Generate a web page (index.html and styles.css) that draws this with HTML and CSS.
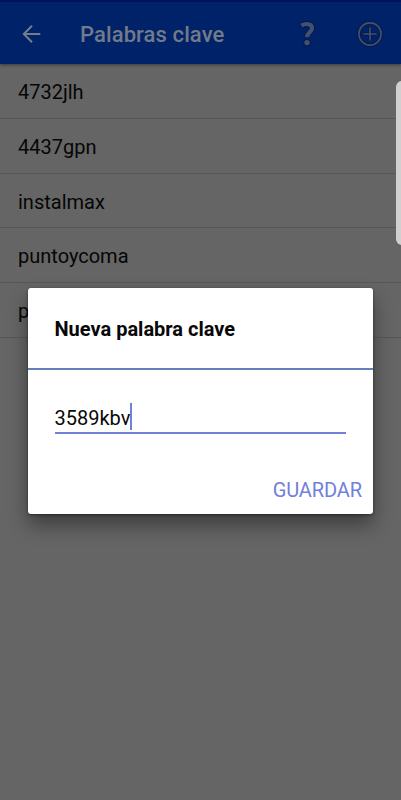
FILE: index.html
```html
<!DOCTYPE html>
<html lang="es">
<head>
<meta charset="utf-8">
<title>Palabras clave</title>
<link rel="stylesheet" href="styles.css">
</head>
<body>
<div class="screen">
  <header class="bar">
    <svg class="back" width="20" height="20" viewBox="0 0 20 20"><path d="M18.3 10H2.2M10 1.8L1.8 10l8.2 8.2"/></svg>
    <h1>Palabras clave</h1>
    <svg class="help" width="18" height="26" viewBox="0 0 18 26"><g class="edge"><path d="M2.4 4.5C7.4 1.8 13 2.8 13 7.2C13 11.2 8.2 11 8 16.2"/><path class="dot" d="M8 21.6h.01"/></g><g class="line"><path d="M2.4 4.5C7.4 1.8 13 2.8 13 7.2C13 11.2 8.2 11 8 16.2"/><path class="dot" d="M8 21.6h.01"/></g></svg>
    <svg class="add" width="26" height="26" viewBox="0 0 26 26"><g class="edge"><circle cx="13" cy="13" r="11.1"/><path d="M13 6.5v13M6.5 13h13"/></g><g class="line"><circle cx="13" cy="13" r="11.1"/><path d="M13 6.5v13M6.5 13h13"/></g></svg>
  </header>
  <ul class="list">
    <li>4732jlh</li>
    <li>4437gpn</li>
    <li>instalmax</li>
    <li>puntoycoma</li>
    <li>p</li>
  </ul>
  <div class="edge-handle"></div>
  <section class="dialog">
    <h2>Nueva palabra clave</h2>
    <div class="content">
      <div class="field"><span>3589kbv</span><i class="caret"></i></div>
      <div class="action">GUARDAR</div>
    </div>
  </section>
</div>
</body>
</html>
```
FILE: styles.css
```css
* { box-sizing: border-box; }
body { margin: 0; font-family: Roboto, sans-serif; }
.screen { position: relative; width: 401px; height: 800px; overflow: hidden; background: #656565; color: #060606; }
.bar { position: relative; display: flex; align-items: center; height: 64px; padding: 1px 0 0 22px; background: #002269; border-top: 2px solid #00115a; box-shadow: 0 1px 3px rgba(0, 0, 0, .45); }
.bar h1 { width: 219px; margin: 2px 0 0 38px; font-size: 22px; line-height: 30px; font-weight: 500; color: #737a89; white-space: nowrap; letter-spacing: .1px; }
.back { fill: none; stroke: #737b8c; stroke-width: 2; }
.help { flex: none; overflow: visible; fill: none; }
.help .edge { stroke: #071a48; stroke-width: 6; }
.help .line { stroke: #42516f; stroke-width: 4.2; }
.help .dot { stroke-linecap: round; }
.help .edge .dot { stroke-width: 7.4; }
.help .line .dot { stroke-width: 5.4; }
.add { flex: none; margin-left: 40px; fill: none; }
.add .edge { stroke: #071a48; stroke-width: 3.6; }
.add .line { stroke: #42516f; stroke-width: 1.6; }
.list { margin: 0; padding: 0; list-style: none; }
.list li { height: 54.8px; padding: 1px 18px 0; border-bottom: 1px solid #575757; font-size: 20px; line-height: 55px; }
.edge-handle { position: absolute; left: 396px; top: 81px; width: 12px; height: 164px; border-radius: 6px; background: #d0d0d0; }
.dialog { position: absolute; left: 27.5px; top: 287.5px; width: 345.5px; height: 226.5px; border-radius: 3px; background: #fff; color: #080808; box-shadow: 0 11px 20px rgba(0, 0, 0, .4), 0 1px 3px rgba(0, 0, 0, .45); }
.dialog h2 { height: 82px; margin: 0; padding-left: 27px; border-bottom: 2px solid #667fba; font-size: 20px; line-height: 83px; font-weight: 700; }
.content { padding: 33px 11px 0 27px; }
.field { display: flex; height: 31.5px; margin-right: 16px; border-bottom: 2px solid #7180d8; font-size: 20px; line-height: 30px; }
.caret { width: 2px; height: 27px; background: #7180d8; }
.action { margin-top: 41px; text-align: right; font-size: 20px; line-height: 30px; letter-spacing: -.1px; color: #7180d8; }
```
